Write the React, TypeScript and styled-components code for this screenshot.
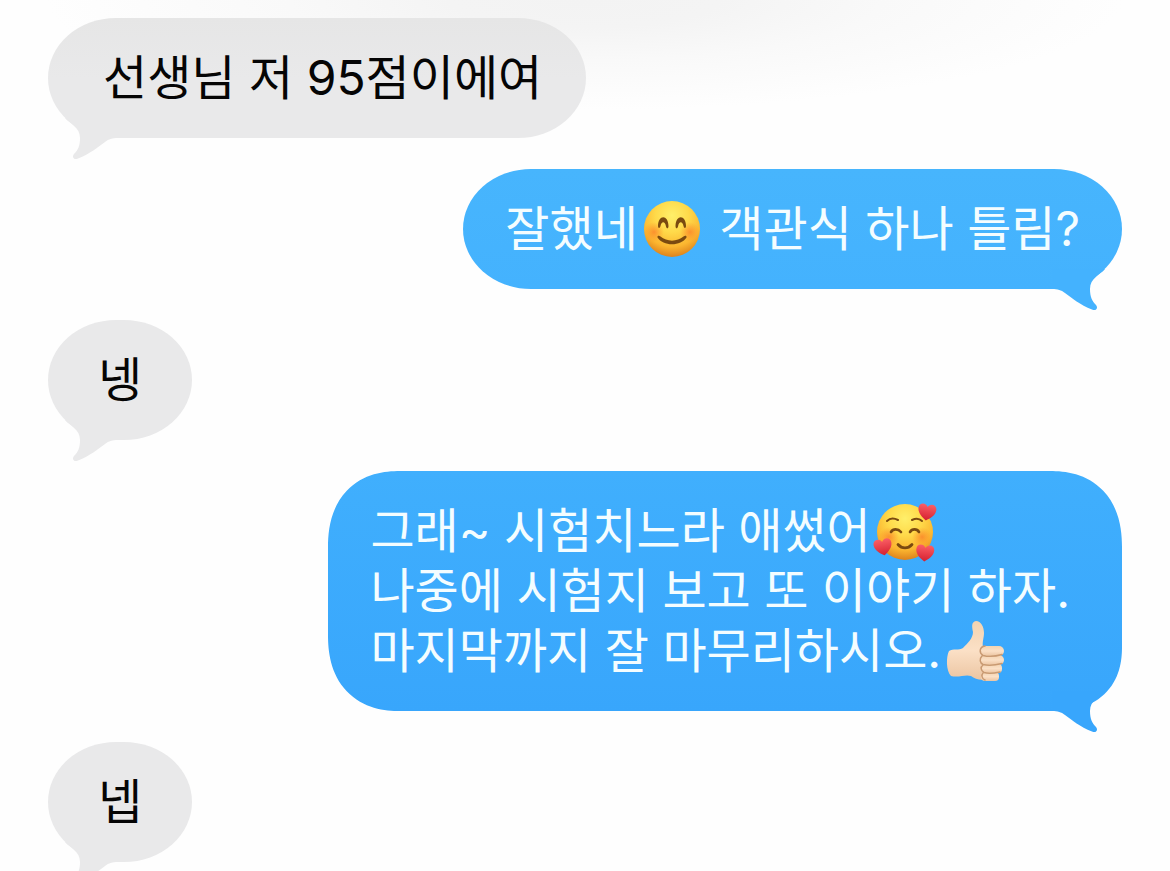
import React from "react";
import styled, { createGlobalStyle } from "styled-components";

type Side = "in" | "out";

const GlobalStyle = createGlobalStyle`
  *, *::before, *::after { box-sizing: border-box; }
  body {
    margin: 0;
    background: #fefefe;
    font-family: Inter, "Noto Sans CJK KR", sans-serif;
  }
`;

const Page = styled.main`
  height: 100vh;
  overflow: hidden;
  padding: 18px 48px 0;
  background: radial-gradient(ellipse 46% 110px at 50% 0, #f3f3f3 0%, #f4f4f4 25%, #f9f9f9 55%, #fefefe 100%) no-repeat #fefefe;
`;

const Thread = styled.ol`
  display: flex;
  flex-direction: column;
  gap: 31px;
  margin: 0;
  padding: 0;
  list-style: none;
`;

const Bubble = styled.li<{ $side: Side; $tint: string; $tail: string }>`
  position: relative;
  align-self: ${(p) => (p.$side === "in" ? "flex-start" : "flex-end")};
  min-width: 144px;
  min-height: 120px;
  padding: ${(p) => (p.$side === "in" ? "30px 44px 30px 55px" : "30px 42px")};
  border-radius: 68px / 60px;
  background: ${(p) => p.$tint};
  color: ${(p) => (p.$side === "in" ? "#050505" : "#f4fdff")};
  --tail: ${(p) => p.$tail};
`;

const ShortBubble = styled(Bubble)`
  padding: 30px 48px;
  text-align: center;
`;

const TallBubble = styled(Bubble)`
  padding-right: 52px;
  border-radius: 72px 72px 68px 72px / 76px 76px 64px 76px;
  corner-shape: superellipse(1.2);
`;

const Text = styled.p`
  margin: 0;
  font-size: 48px;
  line-height: 60px;
`;

const TailShape = styled.svg<{ $side: Side }>`
  position: absolute;
  bottom: -22px;
  ${(p) => (p.$side === "in" ? "left: 0;" : "right: 0; transform: scaleX(-1);")}
  width: 70px;
  height: 44px;
  fill: var(--tail);
`;

const EmojiIcon = styled.svg`
  width: 60px;
  height: 60px;
  margin: 0 4px;
  vertical-align: top;
  overflow: visible;
`;

function Tail({ side }: { side: Side }) {
  return (
    <TailShape $side={side} viewBox="0 0 70 44" aria-hidden="true">
      <path d="M17 2C22 8 32 11 32 22C32 30 30 34 26 38C23.500 41 26 44.500 30 42.500C42 38 50 31 57 26C61 23 64 22 70 22V2Z" />
    </TailShape>
  );
}

function FaceGradient({ id }: { id: string }) {
  return (
    <radialGradient id={id} cx="50%" cy="26%" r="74%">
      <stop offset="0" stopColor="#ffef6a" />
      <stop offset=".4" stopColor="#ffda4a" />
      <stop offset=".75" stopColor="#fbb630" />
      <stop offset="1" stopColor="#dd821c" />
    </radialGradient>
  );
}

function Blush({ id }: { id: string }) {
  return (
    <radialGradient id={id}>
      <stop offset="0" stopColor="#fb7a28" stopOpacity=".7" />
      <stop offset="1" stopColor="#fb8a28" stopOpacity="0" />
    </radialGradient>
  );
}

function SmilingFace() {
  return (
    <EmojiIcon viewBox="0 0 60 60" role="img" aria-label="😊">
      <defs>
        <FaceGradient id="smile-face" />
        <Blush id="smile-blush" />
      </defs>
      <circle cx="30" cy="30" r="28" fill="url(#smile-face)" />
      <circle cx="12" cy="33" r="10" fill="url(#smile-blush)" />
      <circle cx="48" cy="33" r="10" fill="url(#smile-blush)" />
      <g fill="#7a4a10">
        <path d="M16 27C16 16 26 15 26.500 27C26.500 30 24.500 30 24 27.500C23 22 19.500 22 18.500 27C18 29.500 16 29.500 16 27Z" />
        <path d="M33.500 27C34 15 44 16 44 27C44 29.500 42 29.500 41.500 27C40.500 22 37 22 36 27.500C35.500 30 33.500 30 33.500 27Z" />
        <path d="M15.500 38.500C15 36.500 17 36 18.500 37.500C25 43 35 43 41.500 37.500C43 36 45 36.500 44.500 38.500C39 47.500 21 47.500 15.500 38.500Z" />
      </g>
    </EmojiIcon>
  );
}

function Heart({ x, y, turn }: { x: number; y: number; turn: number }) {
  return (
    <path
      transform={`translate(${x} ${y}) rotate(${turn})`}
      d="M0 8.500C-4 6-9 2-9-3C-9-9-2-9.500 0-5C2-9.500 9-9 9-3C9 2 4 6 0 8.500Z"
      fill="url(#heart-fill)"
    />
  );
}

function LovingFace() {
  return (
    <EmojiIcon viewBox="0 0 60 60" role="img" aria-label="🥰">
      <defs>
        <FaceGradient id="love-face" />
        <Blush id="love-blush" />
        <linearGradient id="heart-fill" x1="0" y1="0" x2="0" y2="1">
          <stop offset="0" stopColor="#fb5f66" />
          <stop offset="1" stopColor="#d5202f" />
        </linearGradient>
      </defs>
      <circle cx="30" cy="31" r="28" fill="url(#love-face)" />
      <circle cx="14" cy="36" r="10" fill="url(#love-blush)" />
      <circle cx="47" cy="36" r="10" fill="url(#love-blush)" />
      <g fill="none" stroke="#7a4a10" strokeLinecap="round">
        <path strokeWidth="2" d="M12 20C15 17 19 17 23 19M37 19C41 17 44 17 47 20" />
        <path strokeWidth="2.600" d="M16 31C18 27.500 23 27.500 26 31M35 31C37 27.500 42 27.500 44 31" />
        <path strokeWidth="2.800" d="M23 43.500C27 48 33 48 37 43.500" />
      </g>
      <Heart x={52} y={11} turn={8} />
      <Heart x={8} y={46} turn={-10} />
      <Heart x={50} y={52} turn={5} />
    </EmojiIcon>
  );
}

function ThumbsUp() {
  return (
    <EmojiIcon viewBox="0 0 60 60" role="img" aria-label="👍🏻">
      <defs>
        <linearGradient id="skin" x1="0" y1="0" x2="0" y2="1">
          <stop offset="0" stopColor="#f3d3b0" />
          <stop offset=".5" stopColor="#fbe0c6" />
          <stop offset="1" stopColor="#ecc5a2" />
        </linearGradient>
      </defs>
      <g fill="url(#skin)">
        <path d="M4 30C8 27 14 30 18 27C23 22 28 17 28 11C27 6 26 1 31 0C36 0 39 6 39 12C39 17 37 21 38 26L42 58C36 60 30 58 26 55C20 53 14 57 6 55C1 50 1 36 4 30Z" />
        <rect x="35" y="25" width="24" height="10" rx="5" />
        <rect x="35" y="34" width="24" height="10" rx="5" />
        <rect x="36" y="43" width="21" height="9" rx="4" />
        <rect x="36" y="51" width="18" height="9" rx="4" />
      </g>
      <path
        fill="none"
        stroke="#c99a72"
        strokeLinecap="round"
        strokeWidth="1.500"
        d="M40 25C34 26 34 32 38 34.500C44 36 52 35 57 33.500M37 35C34 38 35 42 38 43.500C44 45 51 44 57 42.500M38 44C35 46 36 50 39 51.500C44 53 50 52 55 51M38 52C36 54 37 58 40 59"
      />
    </EmojiIcon>
  );
}

const GREY = "#e9e9ea";

export default function App() {
  return (
    <>
      <GlobalStyle />
      <Page>
        <Thread>
          <Bubble $side="in" $tint="linear-gradient(#e6e6e6, #e9e9ea 50%)" $tail={GREY}>
            <Tail side="in" />
            <Text>선생님 저 95점이에여</Text>
          </Bubble>
          <Bubble $side="out" $tint="linear-gradient(#47b5fd, #44b2fe)" $tail="#44b2fe">
            <Tail side="out" />
            <Text>
              잘했네
              <SmilingFace /> 객관식 하나 틀림?
            </Text>
          </Bubble>
          <ShortBubble $side="in" $tint={GREY} $tail={GREY}>
            <Tail side="in" />
            <Text>넹</Text>
          </ShortBubble>
          <TallBubble $side="out" $tint="linear-gradient(#40affd, #38a6fc)" $tail="#38a6fc">
            <Tail side="out" />
            <Text>
              그래~ 시험치느라 애썼어
              <LovingFace />
              <br />
              나중에 시험지 보고 또 이야기 하자.
              <br />
              마지막까지 잘 마무리하시오.
              <ThumbsUp />
            </Text>
          </TallBubble>
          <ShortBubble $side="in" $tint={GREY} $tail={GREY}>
            <Tail side="in" />
            <Text>넵</Text>
          </ShortBubble>
        </Thread>
      </Page>
    </>
  );
}
